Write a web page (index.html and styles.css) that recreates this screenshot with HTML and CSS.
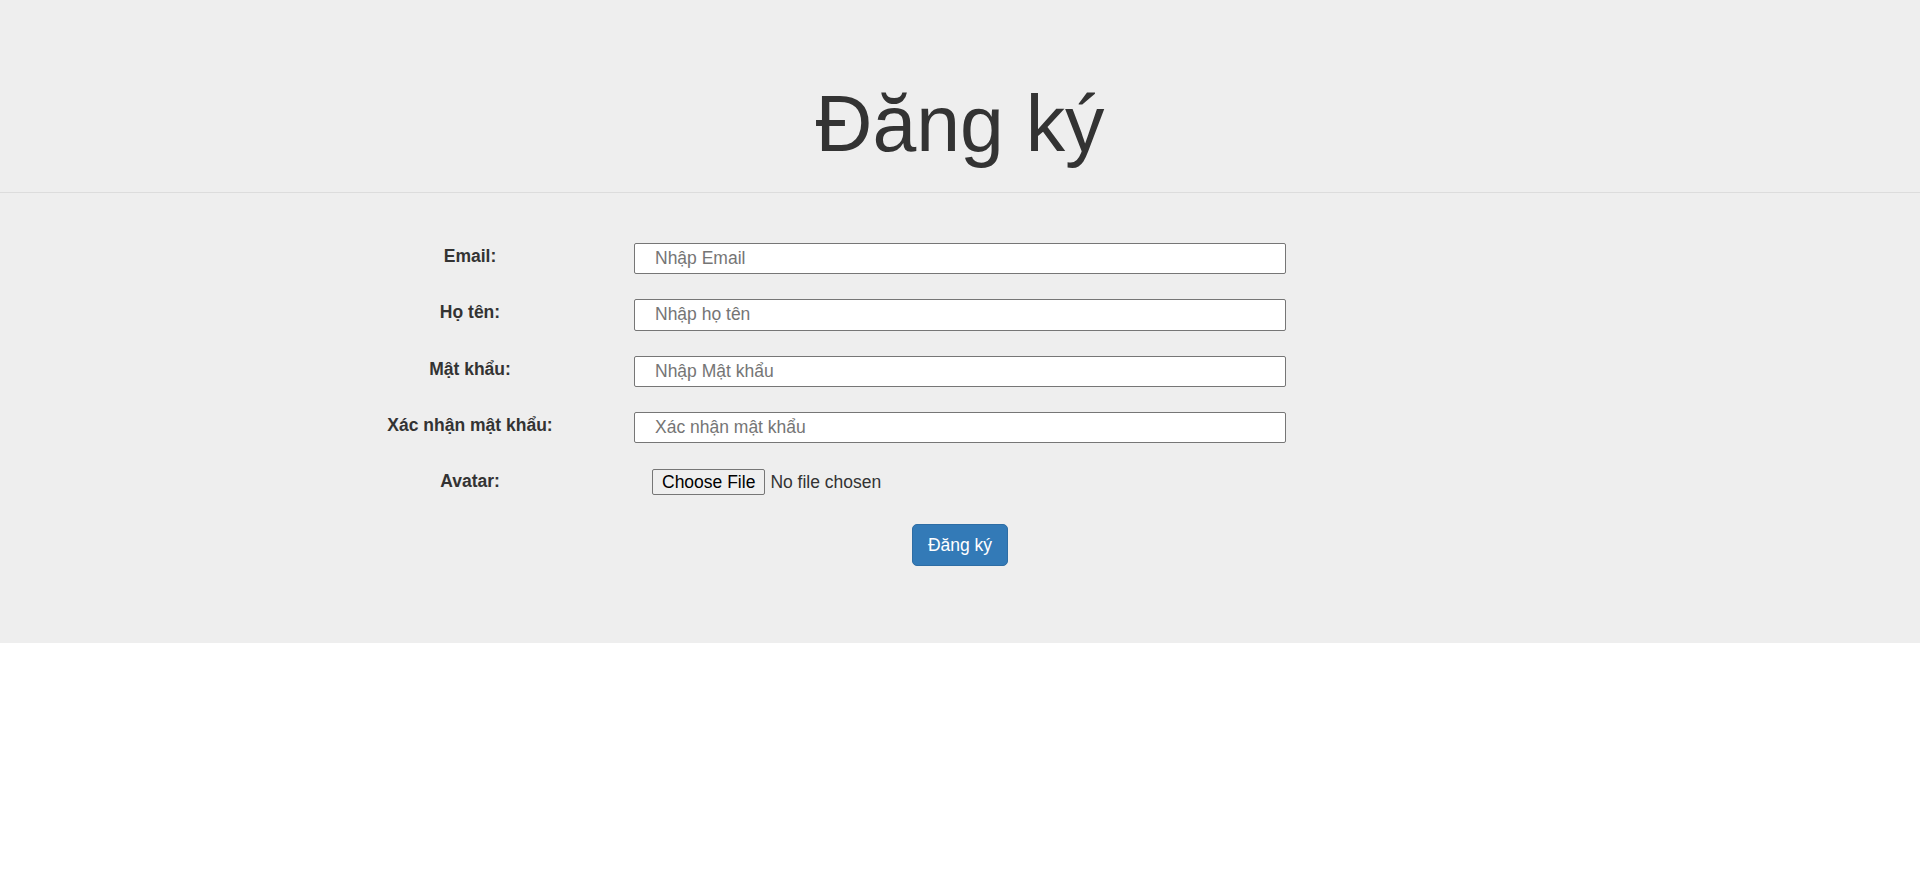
FILE: index.html
```html
<!DOCTYPE html>
<html lang="vi">
<head>
<meta charset="utf-8">
<title>Đăng ký</title>
<link rel="stylesheet" href="styles.css">
</head>
<body>
<div class="jumbotron">
  <header class="page-header">
    <h1>Đăng ký</h1>
  </header>
  <form class="register-form">
    <div class="form-row">
      <label class="form-label" for="email">Email:</label>
      <input class="form-input" type="text" id="email" placeholder="Nhập Email">
    </div>
    <div class="form-row">
      <label class="form-label" for="name">Họ tên:</label>
      <input class="form-input" type="text" id="name" placeholder="Nhập họ tên">
    </div>
    <div class="form-row">
      <label class="form-label" for="pass">Mật khẩu:</label>
      <input class="form-input" type="password" id="pass" placeholder="Nhập Mật khẩu">
    </div>
    <div class="form-row">
      <label class="form-label" for="pass2">Xác nhận mật khẩu:</label>
      <input class="form-input" type="password" id="pass2" placeholder="Xác nhận mật khẩu">
    </div>
    <div class="form-row">
      <label class="form-label" for="avatar">Avatar:</label>
      <input class="file-input" type="file" id="avatar">
    </div>
    <div class="submit-row">
      <button class="btn-primary" type="submit">Đăng ký</button>
    </div>
  </form>
</div>
</body>
</html>
```
FILE: styles.css
```css
* {
  box-sizing: border-box;
}

html, body {
  margin: 0;
  padding: 0;
  background: #fff;
}

body {
  font-family: "Liberation Sans", Arial, sans-serif;
  font-size: 17.5px;
  line-height: 1.42857;
  color: #333;
}

.jumbotron {
  background: #eeeeee;
  padding-bottom: 77px;
}

.page-header {
  padding: 81px 0 24px;
  border-bottom: 1px solid #dcdcdc;
  text-align: center;
}

.page-header h1 {
  margin: 0;
  font-size: 78.75px;
  line-height: 87px;
  font-weight: 400;
  color: #333;
}

.register-form {
  padding-top: 50px;
}

.form-row {
  display: grid;
  grid-template-columns: 300px 652px;
  column-gap: 14px;
  margin-left: 320px;
  height: 56.3px;
  align-items: start;
}

.form-label {
  font-weight: 700;
  text-align: center;
  line-height: 25px;
  padding-top: 1px;
  color: #333;
}

.form-input {
  display: block;
  width: 652px;
  height: 31.25px;
  margin: 0;
  padding: 0 20px;
  border: 1px solid #767676;
  border-radius: 2px;
  background: #fff;
  font-family: inherit;
  font-size: 17.5px;
  color: #333;
  outline: none;
}

.form-input::placeholder {
  color: #757575;
}

.file-input {
  display: block;
  margin: 1px 0 0 18px;
  font-family: inherit;
  font-size: 17.5px;
  color: #333;
  line-height: 24px;
}

.file-input::file-selector-button {
  font-family: inherit;
  font-size: 17.5px;
  color: #000;
  height: 26px;
  padding: 0 9px;
  margin: 0 5px 0 0;
  border: 1px solid #767676;
  border-radius: 2px;
  background: #efefef;
}

.submit-row {
  display: flex;
  justify-content: center;
}

.btn-primary {
  font-family: inherit;
  font-size: 17.5px;
  line-height: 25px;
  padding: 7.5px 15px;
  color: #fff;
  background: #337ab7;
  border: 1.25px solid #2e6da4;
  border-radius: 5px;
  cursor: pointer;
}
```
